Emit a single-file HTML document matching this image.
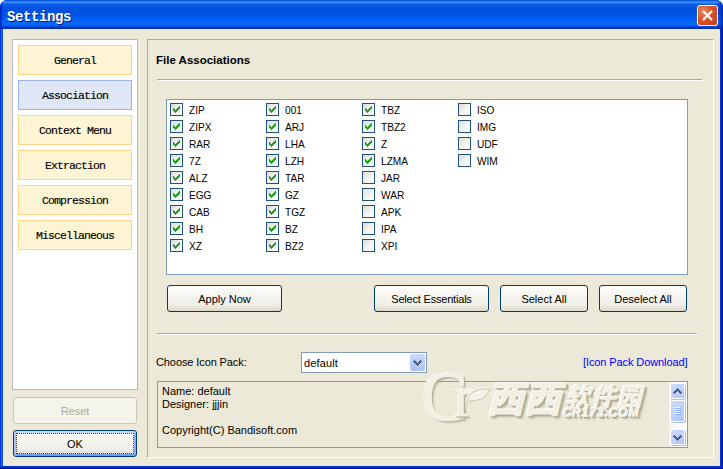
<!DOCTYPE html>
<html lang="en">
<head>
<meta charset="utf-8">
<title>Settings</title>
<style>
html,body{margin:0;padding:0;background:#fff;}
body{width:723px;height:469px;overflow:hidden;position:relative;font-family:"Liberation Sans",sans-serif;font-size:11px;color:#000;}
.abs{position:absolute;}
#win{position:absolute;left:0;top:0;width:723px;height:469px;border-radius:7px 7px 0 0;overflow:hidden;
 background:#0054e3;}
#frameL{left:0;top:29px;width:3px;height:440px;background:linear-gradient(90deg,#0831d9 0,#0831d9 1px,#166aee 1px,#166aee 2px,#0855dd 2px,#0855dd 3px);}
#frameR{left:720px;top:29px;width:3px;height:440px;background:linear-gradient(90deg,#0434d6 0,#0434d6 1px,#0027b4 1px,#0027b4 2px,#00138c 2px,#00138c 3px);}
#frameB{left:0;top:466px;width:723px;height:3px;background:linear-gradient(180deg,#0434d6 0,#0434d6 1px,#0027b4 1px,#0027b4 2px,#00138c 2px,#00138c 3px);}
#title{left:0;top:0;width:723px;height:29px;
 background:linear-gradient(90deg,rgba(0,30,190,.75) 0,rgba(0,30,190,.75) 1px,rgba(0,40,200,0) 3px,rgba(0,40,200,0) 716px,rgba(0,25,170,.55) 722px,rgba(0,15,140,.8) 723px),linear-gradient(180deg,#0a58e0 0.5px,#2878f0 1.5px,#3e90fb 2.5px,#1a6cf0 3.5px,#0860ec 4.5px,#0454e4 6.5px,#0050e0 10.5px,#0054e6 14.5px,#0462f2 20.5px,#0468f8 23.5px,#0460f0 25.5px,#0048d8 26.5px,#0034c4 27.5px,#002eb8 28.5px);}
#title .t{position:absolute;left:7px;top:9px;font-family:"Liberation Mono",monospace;font-weight:bold;font-size:14px;line-height:16px;letter-spacing:-0.4px;color:#fff;text-shadow:1px 1px 0 #0a1883;white-space:pre;}
#close{left:697px;top:5px;width:19px;height:19px;border:1px solid #fff;border-radius:3px;
 background:radial-gradient(circle at 30% 30%,#e98a6c 0,#d9532c 45%,#c13a12 100%);}
#client{left:3px;top:29px;width:717px;height:437px;background:#ece9d8;}
/* left nav */
#nav{left:12px;top:39px;width:124px;height:349px;border:1px solid #b9b8c1;background:#fff;}
.nb{position:absolute;left:18px;width:112px;height:28px;border:1px solid #ffd38c;background:#fff5d4;
 font-family:"Liberation Mono",monospace;font-size:11.5px;letter-spacing:-0.9px;line-height:29px;-webkit-text-stroke:0.15px #000;text-align:center;white-space:pre;}
.nb.sel{border-color:#9ab4e4;background:#dfe7f7;}
/* xp buttons */
.btn{position:absolute;box-sizing:border-box;border:1px solid #003c74;border-radius:3px;
 background:linear-gradient(180deg,#ffffff 0,#f7f6f1 30%,#efeee7 75%,#dcd7ca 100%);
 text-align:center;font-size:11px;white-space:pre;}
.btn.def{box-shadow:inset 0 2px 0 #c2d7fb,inset 2px 0 0 #a9c1f4,inset -2px 0 0 #93abee,inset 0 -2px 0 #7d97e6;}
.btn.def i{position:absolute;left:2px;top:2px;right:2px;bottom:2px;border:1px dotted #4a3a20;}
.btn.dis{border-color:#c9c7ba;background:#f5f4ea;color:#aca899;}
/* panel */
#panel{left:147px;top:39px;width:565px;height:417px;border-top:1px solid #aca899;border-left:1px solid #aca899;border-right:1px solid #fff;border-bottom:1px solid #fff;box-sizing:content-box;}
.hr{position:absolute;height:1px;background:#aca899;box-shadow:1px 1px 0 #fff;}
#list{left:166px;top:99px;width:520px;height:174px;border:1px solid #7f9db9;background:#fff;}
.cb{position:absolute;width:11px;height:11px;border:1px solid #1c5180;background:linear-gradient(135deg,#dcdcd7 0,#f3f3ef 50%,#ffffff 100%);}
.cb svg{position:absolute;left:0;top:0;}
.lb{position:absolute;font-size:11px;line-height:13px;white-space:pre;}
.li{transform:scaleX(.92);transform-origin:0 0;}
#combo{left:301px;top:352px;width:124px;height:19px;border:1px solid #7f9db9;background:#fff;}
#combo .dd{position:absolute;right:1px;top:1px;width:15px;height:17px;border-radius:2px;background:linear-gradient(180deg,#cbd9fc 0,#bacbf7 60%,#aebff0 100%);border:0;}
#info{left:157px;top:381px;width:529px;height:65px;border:1px solid #7f9db9;background:#ece9d8;}
.sbb{position:absolute;width:13px;border-radius:1px;background:linear-gradient(135deg,#cbd9fd 0,#bfd0fa 55%,#b0c3f3 100%);box-shadow:0 0 0 1px #fff,1px 1px 0 1px #a9bfe8;}
.sbb svg{position:absolute;left:0;top:0;}
.wm{position:absolute;color:#f2f0e3;text-shadow:-1px -1px 0 #ffffff,1px 1px 0 #aaa590,2px 2px 0 rgba(170,165,144,.6),3px 3px 1px rgba(170,165,144,.3);white-space:pre;}
</style>
</head>
<body>
<div id="win">
 <div id="title" class="abs"><span class="t">Settings</span></div>
 <div id="close" class="abs"><svg width="19" height="19" viewBox="0 0 19 19"><path d="M5 5 L14 14 M14 5 L5 14" stroke="#fff" stroke-width="2.2" stroke-linecap="butt" fill="none"/></svg></div>
 <div id="frameL" class="abs"></div><div id="frameR" class="abs"></div><div id="frameB" class="abs"></div>
 <div id="client" class="abs"></div>

 <div id="nav" class="abs"></div>
 <div class="nb" style="top:45px">General</div>
 <div class="nb sel" style="top:80px">Association</div>
 <div class="nb" style="top:115px">Context Menu</div>
 <div class="nb" style="top:150px">Extraction</div>
 <div class="nb" style="top:185px">Compression</div>
 <div class="nb" style="top:220px">Miscellaneous</div>

 <div class="btn dis" style="left:13px;top:397px;width:124px;height:27px;line-height:27px;">Reset</div>
 <div class="btn def" id="ok" style="left:13px;top:430px;width:124px;height:27px;line-height:26px;">OK<i></i></div>

 <div id="panel" class="abs"></div>
 <div class="lb" style="left:156px;top:54px;font-weight:bold;font-size:11.5px;" id="fa">File Associations</div>
 <div class="hr" style="left:157px;top:79px;width:545px;"></div>
 <div id="list" class="abs"></div>
  <div class="cb" style="left:170px;top:103px"><svg width="11" height="11" viewBox="0 0 11 11" shape-rendering="crispEdges"><path d="M2 4h1v3h-1zM3 5h1v3h-1zM4 6h1v3h-1zM5 5h1v3h-1zM6 4h1v3h-1zM7 3h1v3h-1zM8 2h1v3h-1z" fill="#21a121"/></svg></div><div class="lb li" style="left:189px;top:104px">ZIP</div>
 <div class="cb" style="left:170px;top:120px"><svg width="11" height="11" viewBox="0 0 11 11" shape-rendering="crispEdges"><path d="M2 4h1v3h-1zM3 5h1v3h-1zM4 6h1v3h-1zM5 5h1v3h-1zM6 4h1v3h-1zM7 3h1v3h-1zM8 2h1v3h-1z" fill="#21a121"/></svg></div><div class="lb li" style="left:189px;top:121px">ZIPX</div>
 <div class="cb" style="left:170px;top:137px"><svg width="11" height="11" viewBox="0 0 11 11" shape-rendering="crispEdges"><path d="M2 4h1v3h-1zM3 5h1v3h-1zM4 6h1v3h-1zM5 5h1v3h-1zM6 4h1v3h-1zM7 3h1v3h-1zM8 2h1v3h-1z" fill="#21a121"/></svg></div><div class="lb li" style="left:189px;top:138px">RAR</div>
 <div class="cb" style="left:170px;top:154px"><svg width="11" height="11" viewBox="0 0 11 11" shape-rendering="crispEdges"><path d="M2 4h1v3h-1zM3 5h1v3h-1zM4 6h1v3h-1zM5 5h1v3h-1zM6 4h1v3h-1zM7 3h1v3h-1zM8 2h1v3h-1z" fill="#21a121"/></svg></div><div class="lb li" style="left:189px;top:155px">7Z</div>
 <div class="cb" style="left:170px;top:171px"><svg width="11" height="11" viewBox="0 0 11 11" shape-rendering="crispEdges"><path d="M2 4h1v3h-1zM3 5h1v3h-1zM4 6h1v3h-1zM5 5h1v3h-1zM6 4h1v3h-1zM7 3h1v3h-1zM8 2h1v3h-1z" fill="#21a121"/></svg></div><div class="lb li" style="left:189px;top:172px">ALZ</div>
 <div class="cb" style="left:170px;top:188px"><svg width="11" height="11" viewBox="0 0 11 11" shape-rendering="crispEdges"><path d="M2 4h1v3h-1zM3 5h1v3h-1zM4 6h1v3h-1zM5 5h1v3h-1zM6 4h1v3h-1zM7 3h1v3h-1zM8 2h1v3h-1z" fill="#21a121"/></svg></div><div class="lb li" style="left:189px;top:189px">EGG</div>
 <div class="cb" style="left:170px;top:205px"><svg width="11" height="11" viewBox="0 0 11 11" shape-rendering="crispEdges"><path d="M2 4h1v3h-1zM3 5h1v3h-1zM4 6h1v3h-1zM5 5h1v3h-1zM6 4h1v3h-1zM7 3h1v3h-1zM8 2h1v3h-1z" fill="#21a121"/></svg></div><div class="lb li" style="left:189px;top:206px">CAB</div>
 <div class="cb" style="left:170px;top:222px"><svg width="11" height="11" viewBox="0 0 11 11" shape-rendering="crispEdges"><path d="M2 4h1v3h-1zM3 5h1v3h-1zM4 6h1v3h-1zM5 5h1v3h-1zM6 4h1v3h-1zM7 3h1v3h-1zM8 2h1v3h-1z" fill="#21a121"/></svg></div><div class="lb li" style="left:189px;top:223px">BH</div>
 <div class="cb" style="left:170px;top:239px"><svg width="11" height="11" viewBox="0 0 11 11" shape-rendering="crispEdges"><path d="M2 4h1v3h-1zM3 5h1v3h-1zM4 6h1v3h-1zM5 5h1v3h-1zM6 4h1v3h-1zM7 3h1v3h-1zM8 2h1v3h-1z" fill="#21a121"/></svg></div><div class="lb li" style="left:189px;top:240px">XZ</div>
 <div class="cb" style="left:266px;top:103px"><svg width="11" height="11" viewBox="0 0 11 11" shape-rendering="crispEdges"><path d="M2 4h1v3h-1zM3 5h1v3h-1zM4 6h1v3h-1zM5 5h1v3h-1zM6 4h1v3h-1zM7 3h1v3h-1zM8 2h1v3h-1z" fill="#21a121"/></svg></div><div class="lb li" style="left:285px;top:104px">001</div>
 <div class="cb" style="left:266px;top:120px"><svg width="11" height="11" viewBox="0 0 11 11" shape-rendering="crispEdges"><path d="M2 4h1v3h-1zM3 5h1v3h-1zM4 6h1v3h-1zM5 5h1v3h-1zM6 4h1v3h-1zM7 3h1v3h-1zM8 2h1v3h-1z" fill="#21a121"/></svg></div><div class="lb li" style="left:285px;top:121px">ARJ</div>
 <div class="cb" style="left:266px;top:137px"><svg width="11" height="11" viewBox="0 0 11 11" shape-rendering="crispEdges"><path d="M2 4h1v3h-1zM3 5h1v3h-1zM4 6h1v3h-1zM5 5h1v3h-1zM6 4h1v3h-1zM7 3h1v3h-1zM8 2h1v3h-1z" fill="#21a121"/></svg></div><div class="lb li" style="left:285px;top:138px">LHA</div>
 <div class="cb" style="left:266px;top:154px"><svg width="11" height="11" viewBox="0 0 11 11" shape-rendering="crispEdges"><path d="M2 4h1v3h-1zM3 5h1v3h-1zM4 6h1v3h-1zM5 5h1v3h-1zM6 4h1v3h-1zM7 3h1v3h-1zM8 2h1v3h-1z" fill="#21a121"/></svg></div><div class="lb li" style="left:285px;top:155px">LZH</div>
 <div class="cb" style="left:266px;top:171px"><svg width="11" height="11" viewBox="0 0 11 11" shape-rendering="crispEdges"><path d="M2 4h1v3h-1zM3 5h1v3h-1zM4 6h1v3h-1zM5 5h1v3h-1zM6 4h1v3h-1zM7 3h1v3h-1zM8 2h1v3h-1z" fill="#21a121"/></svg></div><div class="lb li" style="left:285px;top:172px">TAR</div>
 <div class="cb" style="left:266px;top:188px"><svg width="11" height="11" viewBox="0 0 11 11" shape-rendering="crispEdges"><path d="M2 4h1v3h-1zM3 5h1v3h-1zM4 6h1v3h-1zM5 5h1v3h-1zM6 4h1v3h-1zM7 3h1v3h-1zM8 2h1v3h-1z" fill="#21a121"/></svg></div><div class="lb li" style="left:285px;top:189px">GZ</div>
 <div class="cb" style="left:266px;top:205px"><svg width="11" height="11" viewBox="0 0 11 11" shape-rendering="crispEdges"><path d="M2 4h1v3h-1zM3 5h1v3h-1zM4 6h1v3h-1zM5 5h1v3h-1zM6 4h1v3h-1zM7 3h1v3h-1zM8 2h1v3h-1z" fill="#21a121"/></svg></div><div class="lb li" style="left:285px;top:206px">TGZ</div>
 <div class="cb" style="left:266px;top:222px"><svg width="11" height="11" viewBox="0 0 11 11" shape-rendering="crispEdges"><path d="M2 4h1v3h-1zM3 5h1v3h-1zM4 6h1v3h-1zM5 5h1v3h-1zM6 4h1v3h-1zM7 3h1v3h-1zM8 2h1v3h-1z" fill="#21a121"/></svg></div><div class="lb li" style="left:285px;top:223px">BZ</div>
 <div class="cb" style="left:266px;top:239px"><svg width="11" height="11" viewBox="0 0 11 11" shape-rendering="crispEdges"><path d="M2 4h1v3h-1zM3 5h1v3h-1zM4 6h1v3h-1zM5 5h1v3h-1zM6 4h1v3h-1zM7 3h1v3h-1zM8 2h1v3h-1z" fill="#21a121"/></svg></div><div class="lb li" style="left:285px;top:240px">BZ2</div>
 <div class="cb" style="left:362px;top:103px"><svg width="11" height="11" viewBox="0 0 11 11" shape-rendering="crispEdges"><path d="M2 4h1v3h-1zM3 5h1v3h-1zM4 6h1v3h-1zM5 5h1v3h-1zM6 4h1v3h-1zM7 3h1v3h-1zM8 2h1v3h-1z" fill="#21a121"/></svg></div><div class="lb li" style="left:381px;top:104px">TBZ</div>
 <div class="cb" style="left:362px;top:120px"><svg width="11" height="11" viewBox="0 0 11 11" shape-rendering="crispEdges"><path d="M2 4h1v3h-1zM3 5h1v3h-1zM4 6h1v3h-1zM5 5h1v3h-1zM6 4h1v3h-1zM7 3h1v3h-1zM8 2h1v3h-1z" fill="#21a121"/></svg></div><div class="lb li" style="left:381px;top:121px">TBZ2</div>
 <div class="cb" style="left:362px;top:137px"><svg width="11" height="11" viewBox="0 0 11 11" shape-rendering="crispEdges"><path d="M2 4h1v3h-1zM3 5h1v3h-1zM4 6h1v3h-1zM5 5h1v3h-1zM6 4h1v3h-1zM7 3h1v3h-1zM8 2h1v3h-1z" fill="#21a121"/></svg></div><div class="lb li" style="left:381px;top:138px">Z</div>
 <div class="cb" style="left:362px;top:154px"><svg width="11" height="11" viewBox="0 0 11 11" shape-rendering="crispEdges"><path d="M2 4h1v3h-1zM3 5h1v3h-1zM4 6h1v3h-1zM5 5h1v3h-1zM6 4h1v3h-1zM7 3h1v3h-1zM8 2h1v3h-1z" fill="#21a121"/></svg></div><div class="lb li" style="left:381px;top:155px">LZMA</div>
 <div class="cb" style="left:362px;top:171px"></div><div class="lb li" style="left:381px;top:172px">JAR</div>
 <div class="cb" style="left:362px;top:188px"></div><div class="lb li" style="left:381px;top:189px">WAR</div>
 <div class="cb" style="left:362px;top:205px"></div><div class="lb li" style="left:381px;top:206px">APK</div>
 <div class="cb" style="left:362px;top:222px"></div><div class="lb li" style="left:381px;top:223px">IPA</div>
 <div class="cb" style="left:362px;top:239px"></div><div class="lb li" style="left:381px;top:240px">XPI</div>
 <div class="cb" style="left:458px;top:103px"></div><div class="lb li" style="left:477px;top:104px">ISO</div>
 <div class="cb" style="left:458px;top:120px"></div><div class="lb li" style="left:477px;top:121px">IMG</div>
 <div class="cb" style="left:458px;top:137px"></div><div class="lb li" style="left:477px;top:138px">UDF</div>
 <div class="cb" style="left:458px;top:154px"></div><div class="lb li" style="left:477px;top:155px">WIM</div>

 <div class="btn" style="left:167px;top:285px;width:115px;height:27px;line-height:27px;">Apply Now</div>
 <div class="btn" style="left:374px;top:285px;width:115px;height:27px;line-height:27px;letter-spacing:-0.2px;">Select Essentials</div>
 <div class="btn" style="left:500px;top:285px;width:88px;height:27px;line-height:27px;">Select All</div>
 <div class="btn" style="left:599px;top:285px;width:88px;height:27px;line-height:27px;">Deselect All</div>

 <div class="hr" style="left:157px;top:333px;width:540px;"></div>
 <div class="lb" style="left:156px;top:356px;letter-spacing:-0.1px;">Choose Icon Pack:</div>
 <div id="combo" class="abs"><span class="lb" style="left:2px;top:4px;letter-spacing:0.15px;">default</span><div class="dd"><svg width="15" height="17" viewBox="0 0 15 17" shape-rendering="crispEdges"><path d="M4 6h1v1h-1zM10 6h1v1h-1zM3 7h3v1h-3zM9 7h3v1h-3zM4 8h3v1h-3zM8 8h3v1h-3zM5 9h5v1h-5zM6 10h3v1h-3zM7 11h1v1h-1z" fill="#4d6185"/></svg></div></div>
 <div class="lb" style="left:583px;top:356px;color:#0000ff;letter-spacing:-0.1px;">[Icon Pack Download]</div>

 <div id="info" class="abs"></div>
<div class="abs" style="left:669px;top:382px;width:18px;height:65px;background:linear-gradient(90deg,#f3f1ec 0,#fbfaf8 40%,#fdfdfb 100%);"></div>
 <div class="sbb" style="left:671px;top:384px;height:14px;"><svg width="13" height="14" viewBox="0 0 13 14" shape-rendering="crispEdges"><path d="M6 4h1v1h-1zM5 5h3v1h-3zM4 6h5v1h-5zM3 7h3v1h-3zM7 7h3v1h-3zM2 8h3v1h-3zM8 8h3v1h-3zM3 9h1v1h-1zM9 9h1v1h-1z" fill="#4d6185"/></svg></div>
 <div class="sbb" style="left:671px;top:401px;height:20px;"><svg width="13" height="20" viewBox="0 0 13 20" shape-rendering="crispEdges"><path d="M3 6h6v1h-6zM3 8h6v1h-6zM3 10h6v1h-6zM3 12h6v1h-6z" fill="#eef4fe"/><path d="M4 7h6v1h-6zM4 9h6v1h-6zM4 11h6v1h-6zM4 13h6v1h-6z" fill="#8cb0f8"/></svg></div>
 <div class="sbb" style="left:671px;top:430px;height:14px;"><svg width="13" height="14" viewBox="0 0 13 14" shape-rendering="crispEdges"><path d="M3 5h1v1h-1zM9 5h1v1h-1zM2 6h3v1h-3zM8 6h3v1h-3zM3 7h3v1h-3zM7 7h3v1h-3zM4 8h5v1h-5zM5 9h3v1h-3zM6 10h1v1h-1z" fill="#4d6185"/></svg></div>
 <div class="lb" style="left:162px;top:385px;">Name: default
Designer: jjjin

Copyright(C) Bandisoft.com</div>

 <div class="wm" id="wmC" style="left:421px;top:362px;font-family:'Liberation Serif',serif;font-size:70px;line-height:70px;-webkit-text-stroke:1.6px #f2f0e3;">C</div>
 <div class="wm" id="wmr" style="left:454px;top:368px;font-family:'Liberation Serif',serif;-webkit-text-stroke:0.8px #f2f0e3;font-size:58px;line-height:58px;">r</div>
 <svg class="abs" id="wmleaf" style="left:464px;top:384px;overflow:visible" width="28" height="22" viewBox="0 0 28 22"><path d="M2 19 C2 8 10 3 25 4 C22 12 14 17 4 15 C8 12 13 9 18 7" fill="#f3f1e4" stroke="#fff" stroke-width="1"/><path d="M3 20 C3 9 11 4 26 5 C23 13 15 18 5 16" fill="none" stroke="#b9b5a2" stroke-width="1" opacity=".7"/></svg>
 <div class="wm" id="wmA" style="left:487px;top:379px;font-family:'Liberation Sans','Noto Sans CJK SC',sans-serif;font-weight:900;font-style:italic;font-size:37px;line-height:44px;">西西</div>
 <div class="wm" id="wmB" style="left:565px;top:382px;font-family:'Liberation Sans','Noto Sans CJK SC',sans-serif;font-weight:700;font-style:italic;font-size:25px;line-height:30px;letter-spacing:1px;">软件园</div>
 <div class="wm" id="wmD" style="left:563px;top:406px;font-family:'Liberation Sans',sans-serif;font-weight:bold;font-style:italic;font-size:12px;line-height:14px;letter-spacing:0.9px;">CR173.COM</div>
</div>
</body>
</html>
